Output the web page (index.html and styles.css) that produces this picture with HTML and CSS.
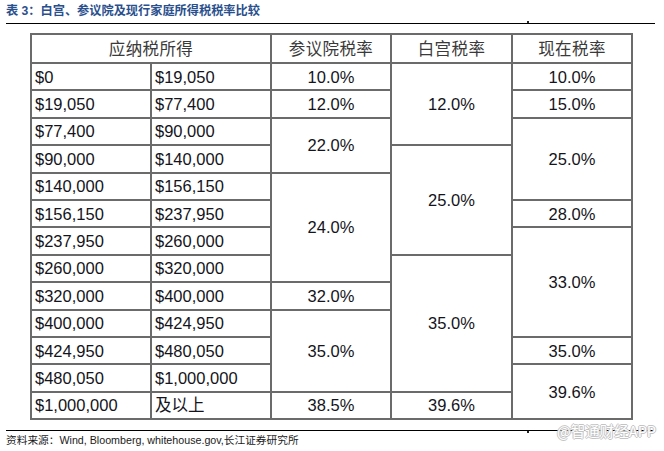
FILE: index.html
```html
<!DOCTYPE html>
<html lang="zh-CN">
<head>
<meta charset="utf-8">
<title>白宫、参议院及现行家庭所得税税率比较</title>
<link rel="stylesheet" href="styles.css">
</head>
<body>
<div class="page">
  <div class="title">表 3：白宫、参议院及现行家庭所得税税率比较</div>
  <div class="rule top"></div>
  <div class="table-wrap">
    <table class="rates">
      <colgroup>
        <col class="c-inc"><col class="c-inc"><col class="c-rate"><col class="c-rate-mid"><col class="c-rate">
      </colgroup>
      <thead>
        <tr><th colspan="2">应纳税所得</th><th>参议院税率</th><th>白宫税率</th><th>现在税率</th></tr>
      </thead>
      <tbody>
        <tr><td class="inc">$0</td><td class="inc">$19,050</td><td>10.0%</td><td rowspan="3">12.0%</td><td>10.0%</td></tr>
        <tr><td class="inc">$19,050</td><td class="inc">$77,400</td><td>12.0%</td><td>15.0%</td></tr>
        <tr><td class="inc">$77,400</td><td class="inc">$90,000</td><td rowspan="2">22.0%</td><td rowspan="3">25.0%</td></tr>
        <tr><td class="inc">$90,000</td><td class="inc">$140,000</td><td rowspan="4">25.0%</td></tr>
        <tr><td class="inc">$140,000</td><td class="inc">$156,150</td><td rowspan="4">24.0%</td></tr>
        <tr><td class="inc">$156,150</td><td class="inc">$237,950</td><td>28.0%</td></tr>
        <tr><td class="inc">$237,950</td><td class="inc">$260,000</td><td rowspan="4">33.0%</td></tr>
        <tr><td class="inc">$260,000</td><td class="inc">$320,000</td><td rowspan="5">35.0%</td></tr>
        <tr><td class="inc">$320,000</td><td class="inc">$400,000</td><td>32.0%</td></tr>
        <tr><td class="inc">$400,000</td><td class="inc">$424,950</td><td rowspan="3">35.0%</td></tr>
        <tr><td class="inc">$424,950</td><td class="inc">$480,050</td><td>35.0%</td></tr>
        <tr><td class="inc">$480,050</td><td class="inc">$1,000,000</td><td rowspan="2">39.6%</td></tr>
        <tr><td class="inc">$1,000,000</td><td class="inc">及以上</td><td>38.5%</td><td>39.6%</td></tr>
      </tbody>
    </table>
  </div>
  <div class="rule bottom"></div>
  <div class="source">资料来源：Wind, Bloomberg, whitehouse.gov,长江证券研究所</div>
  <div class="watermark">@智通财经APP</div>
</div>
</body>
</html>
```
FILE: styles.css
```css
html, body {
  margin: 0;
  padding: 0;
  background: #ffffff;
}

.page {
  position: relative;
  width: 664px;
  height: 451px;
  padding-top: 3px;
  box-sizing: border-box;
  font-family: "Liberation Sans", "Noto Sans CJK SC", sans-serif;
  color: #111;
}

.title {
  margin-left: 6px;
  height: 16px;
  font-family: "Liberation Sans", "Noto Sans CJK SC", sans-serif;
  font-size: 12.2px;
  line-height: 16px;
  font-weight: bold;
  color: #2a4f8d;
  white-space: nowrap;
}

.rule {
  position: relative;
  height: 1px;
  background: #000;
  margin-left: 6px;
  margin-right: 9px;
}

.rule.top {
  margin-top: 4px;
}

.rule.top::after,
.rule.bottom::after {
  content: "";
  position: absolute;
  left: 521px;
  width: 2px;
  height: 2px;
  background: #222;
}

.rule.top::after {
  top: -2px;
}

.rule.bottom::after {
  top: 1px;
}

.rule.bottom {
  margin-top: 10px;
}

.table-wrap {
  margin-top: 9px;
  padding-left: 30px;
}

.rates {
  border-collapse: collapse;
  table-layout: fixed;
  width: 601px;
  font-size: 16.5px;
  color: #141420;
}

.c-inc {
  width: 120px;
}

.c-rate {
  width: 120px;
}

.c-rate-mid {
  width: 121px;
}

.rates th,
.rates td {
  border: 2px solid #6b6b6b;
  padding: 0 3px;
  text-align: center;
  vertical-align: middle;
  white-space: nowrap;
  line-height: 18px;
}

.rates th {
  font-weight: normal;
  font-size: 16.5px;
  letter-spacing: 0.4px;
  color: #3a3a3a;
  height: 27px;
}

.rates tbody tr {
  height: 27.4px;
}

.rates td.inc {
  text-align: left;
}

.source {
  margin: 2px 0 0 6px;
  font-size: 10.7px;
  line-height: 14px;
  color: #1a1a1a;
  white-space: nowrap;
}

.watermark {
  position: absolute;
  right: 8px;
  top: 421px;
  font-family: "Noto Sans CJK SC", sans-serif;
  font-size: 14.5px;
  line-height: 20px;
  color: #ffffff;
  text-shadow:
    -1px 0 0 #c4c4c4,
    1px 0 0 #c4c4c4,
    0 -1px 0 #c4c4c4,
    0 1px 0 #c4c4c4;
  white-space: nowrap;
}
```
